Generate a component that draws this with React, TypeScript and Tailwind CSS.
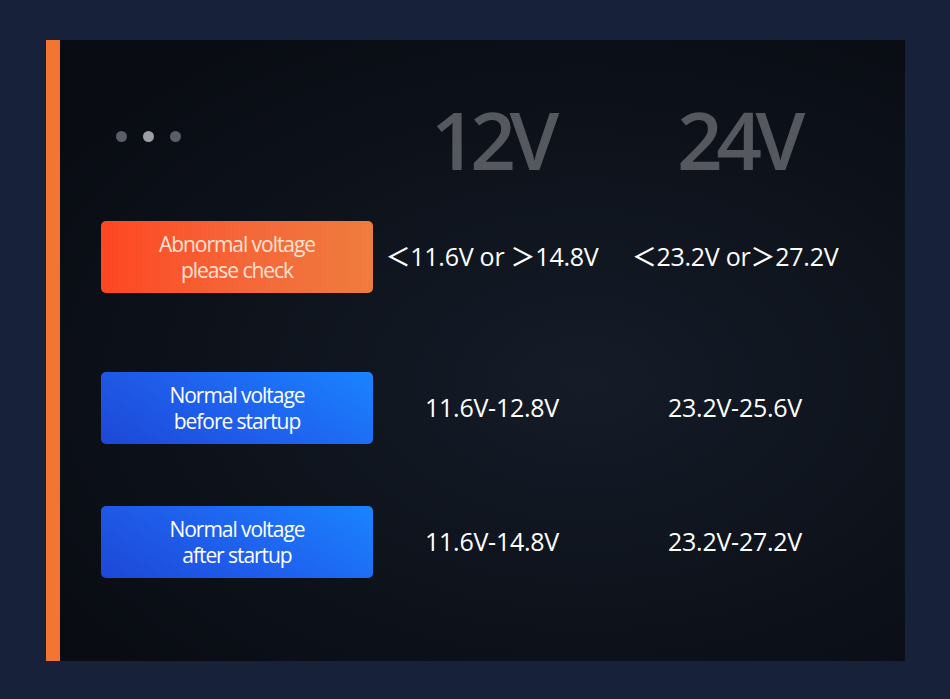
import React from "react";

const font = { fontFamily: '"Open Sans", "Noto Sans CJK SC", sans-serif' };

function Label({ kind, l1, l2 }: { kind: "orange" | "blue"; l1: string; l2: string }) {
  const cls =
    kind === "orange"
      ? "bg-[linear-gradient(90deg,#fe4722_0%,#f4683a_55%,#ef7c3d_100%)] text-[#ffe2d4]"
      : "bg-[linear-gradient(30deg,#1d48d6_0%,#1f62ee_50%,#1a84ff_100%)] text-white";
  return (
    <div
      className={`w-[272px] h-[72px] rounded-[5px] flex flex-col items-center justify-center text-[21px] font-medium leading-[26px] tracking-[-0.05em] ${cls}`}
    >
      <span>{l1}</span>
      <span>{l2}</span>
    </div>
  );
}

function Row({ kind, l1, l2, a, b, mt }: { kind: "orange" | "blue"; l1: string; l2: string; a: string; b: string; mt: string }) {
  return (
    <div className={`flex items-center ${mt}`}>
      <Label kind={kind} l1={l1} l2={l2} />
      <div className="w-[238px] text-center text-white text-[25px] font-medium tracking-[-0.01em]">{a}</div>
      <div className="w-[254px] pr-[6px] text-center text-white text-[25px] font-medium tracking-[-0.01em]">{b}</div>
    </div>
  );
}

export default function App() {
  return (
    <div style={font} className="w-[950px] h-[699px] bg-[#18213a] pt-[40px] pl-[46px]">
      <div className="w-[859px] h-[621px] flex">
        <div className="w-[14px] h-full bg-[#f27531]" />
        <div className="flex-1 h-full pl-[41px] bg-[radial-gradient(ellipse_at_62%_55%,#151c28_0%,#0e131c_45%,#090c13_85%)]">
          <div className="flex h-[181px] items-start">
            <div className="w-[272px] flex items-center gap-[16px] pl-[15px] mt-[91px]">
              <span className="w-[11px] h-[11px] rounded-full bg-[#5a5e66]" />
              <span className="w-[11px] h-[11px] rounded-full bg-[#9c9fa5]" />
              <span className="w-[11px] h-[11px] rounded-full bg-[#5a5e66]" />
            </div>
            <div className="w-[238px] text-center mt-[59px] text-[80px] leading-[80px] font-semibold tracking-[-0.08em] text-[#55585e]">
              12V
            </div>
            <div className="w-[254px] text-center mt-[59px] text-[80px] leading-[80px] font-semibold tracking-[-0.08em] text-[#55585e]">
              24V
            </div>
          </div>
          <Row kind="orange" l1="Abnormal voltage" l2="please check" a="＜11.6V or ＞14.8V" b="＜23.2V or＞27.2V" mt="" />
          <Row kind="blue" l1="Normal voltage" l2="before startup" a="11.6V-12.8V" b="23.2V-25.6V" mt="mt-[79px]" />
          <Row kind="blue" l1="Normal voltage" l2="after startup" a="11.6V-14.8V" b="23.2V-27.2V" mt="mt-[62px]" />
        </div>
      </div>
    </div>
  );
}
